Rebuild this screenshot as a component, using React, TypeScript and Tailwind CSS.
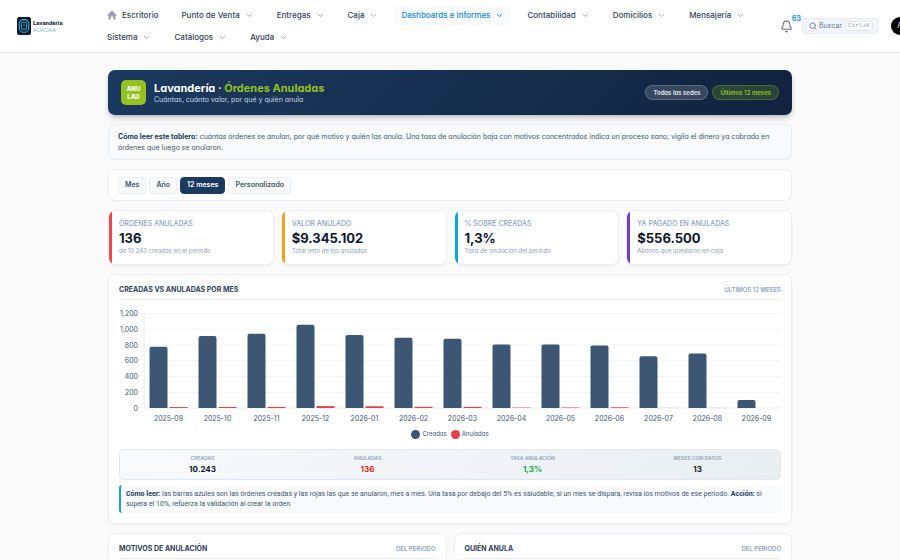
import React, { useState } from 'react';
import { Bell, ChevronDown, Search } from 'lucide-react';

const navItems = [
  'Punto de Venta',
  'Entregas',
  'Caja',
  'Dashboards e Informes',
  'Contabilidad',
  'Domicilios',
  'Mensajería',
  'Sistema',
  'Catálogos',
  'Ayuda',
];

const periods = ['Mes', 'Año', '12 meses', 'Personalizado'];

const kpis = [
  { label: 'Órdenes anuladas', value: '136', hint: 'de 10.243 creadas en el periodo', accent: 'bg-[#e5484d]' },
  { label: 'Valor anulado', value: '$9.345.102', hint: 'Total neto de las anuladas', accent: 'bg-[#f0a020]' },
  { label: '% sobre creadas', value: '1,3%', hint: 'Tasa de anulación del periodo', accent: 'bg-[#0ea5d8]' },
  { label: 'Ya pagado en anuladas', value: '$556.500', hint: 'Abonos que quedaron en caja', accent: 'bg-[#6d3bd1]' },
];

const months = [
  { month: '2025-09', created: 778, voided: 12 },
  { month: '2025-10', created: 913, voided: 13 },
  { month: '2025-11', created: 942, voided: 14 },
  { month: '2025-12', created: 1057, voided: 24 },
  { month: '2026-01', created: 927, voided: 22 },
  { month: '2026-02', created: 891, voided: 15 },
  { month: '2026-03', created: 878, voided: 14 },
  { month: '2026-04', created: 806, voided: 5 },
  { month: '2026-05', created: 806, voided: 6 },
  { month: '2026-06', created: 793, voided: 9 },
  { month: '2026-07', created: 658, voided: 1 },
  { month: '2026-08', created: 692, voided: 1 },
  { month: '2026-09', created: 102, voided: 0 },
];

const stats = [
  { label: 'Creadas', value: '10.243', color: 'text-slate-900' },
  { label: 'Anuladas', value: '136', color: 'text-[#dc2626]' },
  { label: 'Tasa anulación', value: '1,3%', color: 'text-[#16a34a]' },
  { label: 'Meses con datos', value: '13', color: 'text-slate-900' },
];

function Logo() {
  return (
    <a href="#" className="flex w-[83px] shrink-0 items-center gap-[2px]">
      <svg viewBox="0 0 14 18" className="h-[18px] w-[14px]" fill="none">
        <rect width="14" height="18" rx="2.5" fill="#07162c" />
        <rect x="2.2" y="2.6" width="9.6" height="12.6" rx="4.2" stroke="#3bb4d4" strokeWidth="1.1" />
        <rect x="4.3" y="4.9" width="5.4" height="8" rx="2.7" stroke="#3bb4d4" strokeWidth="1" />
        <ellipse cx="7" cy="8.9" rx="0.9" ry="2" stroke="#1c6f97" strokeWidth="0.8" />
      </svg>
      <span className="flex flex-col font-['Roboto',sans-serif] text-[6px] leading-[7px]">
        <b className="text-[#10233c]">Lavandería</b>
        <span className="font-light text-[#5ea3bd]">AURORA</span>
      </span>
    </a>
  );
}

function NavBar() {
  return (
    <header className="flex h-[53px] items-center border-b border-gray-200 bg-white pl-[17px]">
      <Logo />
      <nav className="flex min-w-[676px] flex-1 flex-wrap gap-x-[9px] gap-y-[2px] text-[8px] font-medium text-gray-700">
        <a href="#" className="flex h-5 items-center gap-[5px] px-[7px]">
          <svg viewBox="0 0 20 20" className="h-[10px] w-[10px] fill-gray-400">
            <path d="M9.3 1.3a1 1 0 0 1 1.4 0l8.5 8.5a1 1 0 0 1-.7 1.7H17V18a1 1 0 0 1-1 1h-3.500v-5a1 1 0 0 0-1-1h-3a1 1 0 0 0-1 1v5H4a1 1 0 0 1-1-1v-6.500H1.500a1 1 0 0 1-.7-1.700z" />
          </svg>
          Escritorio
        </a>
        {navItems.map((item) => {
          const active = item === 'Dashboards e Informes';
          return (
            <button
              key={item}
              type="button"
              className={`flex h-5 items-center gap-[5px] rounded-[5px] px-[7px] ${active ? 'bg-gray-50 text-[#2088c9]' : ''}`}
            >
              {item}
              <ChevronDown className={`h-[9px] w-[9px] ${active ? '' : 'text-gray-400'}`} strokeWidth={2.5} />
            </button>
          );
        })}
      </nav>
      <div className="flex shrink-0 items-center">
        <button type="button" aria-label="Notificaciones" className="relative ml-[3px] p-px text-gray-500">
          <Bell className="h-[13px] w-[13px]" strokeWidth={2} />
          <span className="absolute -top-[4px] left-[12px] rounded bg-sky-50 px-px text-[7px] leading-[8px] font-semibold text-[#2088c9]">63</span>
        </button>
        <button
          type="button"
          className="ml-2 flex h-4 items-center gap-[2px] rounded-[4px] border border-slate-200/60 bg-slate-100 pr-[5px] pl-[6px] text-[7px] text-slate-500"
        >
          <Search className="h-[8px] w-[8px]" strokeWidth={2.5} />
          Buscar
          <kbd className="ml-px rounded-[2px] border border-slate-200 bg-white px-[2px] font-['Liberation_Mono',monospace] text-[6px] leading-[8px] text-slate-400">
            Ctrl+K
          </kbd>
        </button>
        <button type="button" className="ml-3 h-[18px] w-[18px] rounded-full bg-black text-[7px] text-white">
          A
        </button>
      </div>
    </header>
  );
}

function Hero() {
  return (
    <section className="flex h-[45px] items-center rounded-[7px] bg-linear-135 from-[#1b3a5f] to-[#11233f] px-[13px] shadow-md shadow-slate-900/20">
      <div className="flex h-[25px] w-[25px] flex-col items-center justify-center rounded-[5px] bg-[#93c11f] text-[6px] leading-[8px] font-extrabold text-white">
        <span>ANU</span>
        <span>LAD</span>
      </div>
      <div className="ml-2 flex-1">
        <h1 className="text-[11px] leading-[14px] font-bold text-white">
          Lavandería · <span className="text-[#93c11f]">Órdenes Anuladas</span>
        </h1>
        <p className="text-[7px] leading-[9px] text-slate-300">Cuántas, cuánto valor, por qué y quién anula</p>
      </div>
      <div className="flex gap-1 text-[6px] font-semibold">
        <span className="flex h-[15px] items-center rounded-full border border-white/20 bg-white/15 px-[7px] text-slate-200">
          Todas las sedes
        </span>
        <span className="flex h-[15px] items-center rounded-full border border-[#93c11f]/30 bg-[#93c11f]/20 px-[7px] text-[#93c11f]">
          Últimos 12 meses
        </span>
      </div>
    </section>
  );
}

function PeriodFilter() {
  const [period, setPeriod] = useState('12 meses');

  return (
    <section className="flex h-8 items-center gap-[3px] rounded-[7px] border border-slate-200/70 bg-white px-[9px]">
      {periods.map((p) => (
        <button
          key={p}
          type="button"
          onClick={() => setPeriod(p)}
          className={`h-[17px] rounded-[4px] border px-[6px] text-[7px] font-semibold ${
            p === period ? 'border-[#1b3a5f] bg-[#1b3a5f] text-white' : 'border-slate-200/70 bg-slate-50 text-slate-600'
          }`}
        >
          {p}
        </button>
      ))}
    </section>
  );
}

function BarChart() {
  const base = 104;
  const left = 25;
  const step = 49;
  const toY = (value: number) => base - (value * 94.5) / 1200;

  return (
    <svg viewBox="0 0 662 122" className="mt-[4px] block w-full" role="img" aria-label="Creadas vs anuladas por mes">
      {[0, 200, 400, 600, 800, 1000, 1200].map((tick) => (
        <g key={tick}>
          <line x1={left} x2="662" y1={toY(tick)} y2={toY(tick)} stroke={tick === 0 ? '#e2e8f0' : '#f1f5f9'} />
          <text x="19" y={toY(tick) + 2.5} textAnchor="end" className="fill-slate-600 text-[7px]">
            {tick.toLocaleString('en-US')}
          </text>
        </g>
      ))}
      <line x1={left} x2={left} y1="9" y2={base} stroke="#e2e8f0" />
      {months.map((m, i) => {
        const center = left + step * i + step / 2;
        const top = toY(m.created);
        return (
          <g key={m.month}>
            <path
              d={`M${center - 19} ${base}V${top + 2}q0-2 2-2h14q2 0 2 2V${base}z`}
              fill="#3d5673"
            />
            <rect x={center + 1} y={toY(m.voided)} width="18" height={base - toY(m.voided)} fill="#e5404a" />
            <text x={center} y="117" textAnchor="middle" className="fill-slate-600 text-[7px]">
              {m.month}
            </text>
          </g>
        );
      })}
    </svg>
  );
}

function CardHeader({ title, note }: { title: string; note: string }) {
  return (
    <div className="flex h-[25px] items-center justify-between border-b border-slate-200/70 pt-[6px] uppercase">
      <h2 className="text-[7px] leading-[10px] font-bold text-slate-700">{title}</h2>
      <span className="text-[6px] leading-[10px] font-semibold text-slate-400">{note}</span>
    </div>
  );
}

const App = () => {
  return (
    <div className="min-h-screen overflow-hidden bg-[#fafafa] font-['Inter',sans-serif]">
      <NavBar />

      <main className="mx-auto mt-[17px] flex max-w-[684px] flex-col gap-[9px] [font-feature-settings:'cv11']">
        <Hero />

        <section className="rounded-[7px] border border-slate-200/70 bg-slate-50 px-[9px] py-[6px] text-[7px] leading-[11px] text-slate-600">
          <b className="text-[#1b3a5f]">Cómo leer este tablero:</b> cuántas órdenes se anulan, por qué motivo y quién las
          anula. Una tasa de anulación baja con motivos concentrados indica un proceso sano; vigila el dinero ya cobrado
          en órdenes que luego se anularon.
        </section>

        <PeriodFilter />

        <section className="grid grid-cols-4 gap-[7px]">
          {kpis.map((kpi) => (
            <div
              key={kpi.label}
              className="flex h-[55px] overflow-hidden rounded-[7px] border border-slate-200/70 bg-white shadow-xs"
            >
              <span className={`w-[3px] shrink-0 ${kpi.accent}`} />
              <div className="flex flex-col justify-center px-[7px]">
                <span className="text-[7px] leading-[8px] font-medium text-slate-400 uppercase">{kpi.label}</span>
                <span className="mt-[2px] text-[13px] leading-[16px] font-bold text-slate-900">{kpi.value}</span>
                <span className="mt-px text-[6px] leading-[8px] text-slate-400">{kpi.hint}</span>
              </div>
            </div>
          ))}
        </section>

        <section className="rounded-[7px] border border-slate-200/70 bg-white px-[10px] pb-[10px] shadow-xs">
          <CardHeader title="Creadas vs anuladas por mes" note="Últimos 12 meses" />
          <BarChart />
          <div className="mt-[3px] flex justify-center gap-1 text-[6px] leading-[10px] text-slate-600">
            <span className="flex items-center gap-[2px]">
              <span className="h-[9px] w-[9px] rounded-full bg-[#3d5673]" />
              Creadas
            </span>
            <span className="flex items-center gap-[2px]">
              <span className="h-[9px] w-[9px] rounded-full bg-[#e5404a]" />
              Anuladas
            </span>
          </div>

          <div className="mt-[10px] grid h-[31px] grid-cols-4 items-center rounded-[5px] border border-slate-200 bg-linear-135 from-slate-50 to-[#e9eef3] text-center">
            {stats.map((stat) => (
              <div key={stat.label} className="flex flex-col">
                <span className="text-[5px] leading-[7px] font-semibold text-slate-400 uppercase">{stat.label}</span>
                <span className={`mt-px text-[8px] leading-[12px] font-bold ${stat.color}`}>{stat.value}</span>
              </div>
            ))}
          </div>

          <p className="mt-[5px] rounded-[3px] border-l-2 border-[#1e9ad6] bg-slate-50 px-[5px] py-[4px] font-['Roboto',sans-serif] text-[7px] leading-[10px] text-slate-600">
            <b className="text-[#1b3a5f]">Cómo leer:</b> las barras azules son las órdenes creadas y las rojas las que se
            anularon, mes a mes. Una tasa por debajo del 5% es saludable; si un mes se dispara, revisa los motivos de ese
            periodo. <b className="text-[#1b3a5f]">Acción:</b> si supera el 10%, refuerza la validación al crear la orden.
          </p>
        </section>

        <section className="grid grid-cols-2 gap-[7px]">
          <div className="rounded-t-[7px] border border-b-0 border-slate-200/70 bg-white px-[10px]">
            <CardHeader title="Motivos de anulación" note="Del periodo" />
          </div>
          <div className="rounded-t-[7px] border border-b-0 border-slate-200/70 bg-white px-[10px]">
            <CardHeader title="Quién anula" note="Del periodo" />
          </div>
        </section>
      </main>
    </div>
  );
};

export default App;
